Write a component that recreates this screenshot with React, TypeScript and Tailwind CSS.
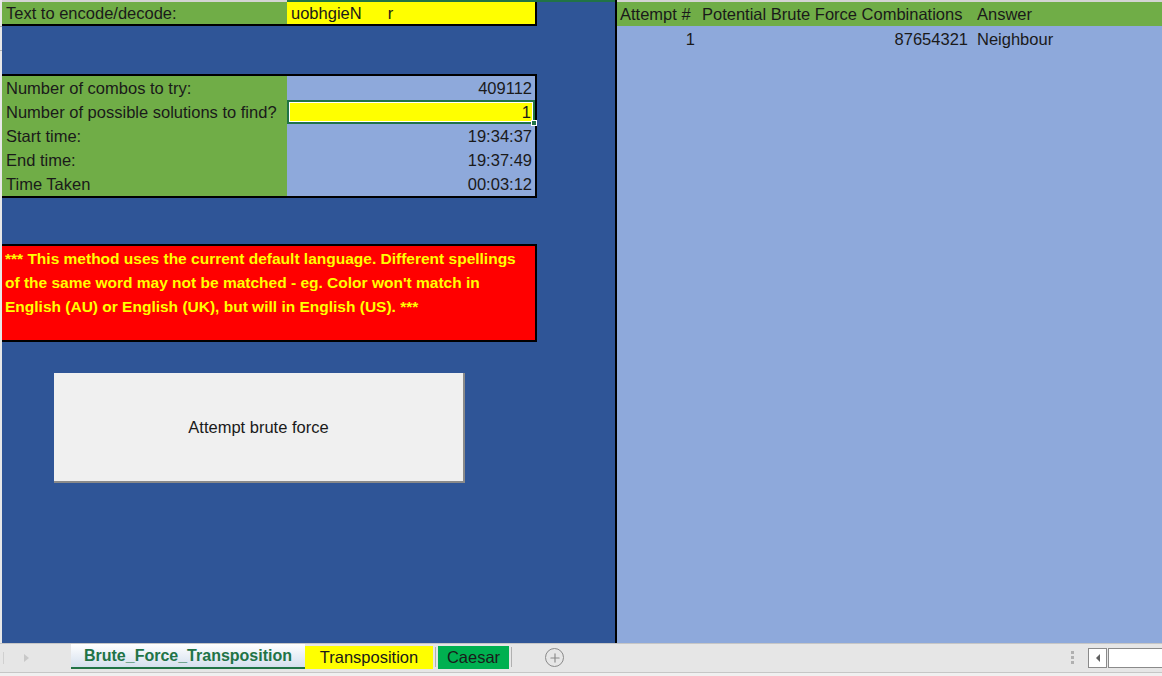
import { Plus } from "lucide-react";

const FONT = { fontFamily: '"Liberation Sans", Arial, sans-serif' };

const rows = [
  { label: "Number of combos to try:", value: "409112" },
  { label: "Number of possible solutions to find?", value: "1", selected: true },
  { label: "Start time:", value: "19:34:37" },
  { label: "End time:", value: "19:37:49" },
  { label: "Time Taken", value: "00:03:12" },
];

function LeftPane() {
  return (
    <div className="flex w-[615px] flex-col bg-[#2f5597]">
      {/* column header edge */}
      <div className="flex h-[2px]">
        <div className="w-[285px] bg-[#d4d4d4]" />
        <div className="flex-1 bg-[#217346]" />
      </div>

      {/* input row */}
      <div className="flex h-[24px] w-[535px] border-b-2 border-r-2 border-black">
        <div className="flex w-[285px] items-center bg-[#70ad47] pl-1 pt-[1px] text-[#1a1a1a]">
          Text to encode/decode:
        </div>
        <div className="flex flex-1 items-center bg-[#ffff00] pl-1 pt-[1px] text-[#1a1a1a]">
          <span>uobhgieN</span>
          <span className="ml-[26px]">r</span>
        </div>
      </div>

      {/* stats table */}
      <div className="mt-[48px] w-[535px] border-2 border-l-0 border-black">
        {rows.map((r) => (
          <div key={r.label} className="flex h-[24px]">
            <div className="flex w-[285px] items-center bg-[#70ad47] pl-1 pt-[1px] text-[#1a1a1a]">
              {r.label}
            </div>
            <div className="flex flex-1 bg-[#8ea9db]">
              {r.selected ? (
                <div className="relative flex flex-1 items-center justify-end border-2 border-[#217346] bg-[#ffff00] pr-[2px] pt-[1px] text-[#1a1a1a]">
                  <div className="absolute inset-0 border border-white" />
                  {r.value}
                  <div className="absolute -bottom-[4px] -right-[4px] h-[6px] w-[6px] border border-white bg-[#217346]" />
                </div>
              ) : (
                <div className="flex flex-1 items-center justify-end pr-[3px] pt-[1px] text-[#1a1a1a]">{r.value}</div>
              )}
            </div>
          </div>
        ))}
      </div>

      {/* warning */}
      <div className="mt-[46px] h-[98px] w-[535px] border-2 border-l-0 border-black bg-[#ff0000] pl-[3px] pr-[10px] pt-[1px] text-[15.5px] font-bold leading-[24px] text-[#ffff00]">
        *** This method uses the current default language. Different spellings of the same word may not be matched - eg. Color won't match in English (AU) or English (UK), but will in English (US). ***
      </div>

      {/* button */}
      <div className="ml-[52px] mt-[31px] flex h-[110px] w-[411px] items-center justify-center border-b-2 border-r-2 border-[#8a8a8a] bg-[#f0f0f0] text-[#1a1a1a]">
        Attempt brute force
      </div>
    </div>
  );
}

function RightPane() {
  return (
    <div className="flex flex-1 flex-col bg-[#8ea9db]">
      <div className="flex h-[2px] bg-[#d4d4d4]" />
      <div className="flex h-[24px] items-center bg-[#70ad47] pt-[1px] text-[#1a1a1a]">
        <div className="w-[82px] pl-[3px]">Attempt #</div>
        <div className="w-[273px] pl-[3px]">Potential Brute Force Combinations</div>
        <div className="pl-[5px]">Answer</div>
      </div>
      <div className="flex h-[24px] items-center pt-[3px] text-[#1a1a1a]">
        <div className="w-[82px] pr-[4px] text-right">1</div>
        <div className="w-[273px] pr-[4px] text-right">87654321</div>
        <div className="pl-[5px]">Neighbour</div>
      </div>
    </div>
  );
}

function TabBar() {
  return (
    <div className="flex h-[33px] flex-col bg-[#f0f0f0]">
      <div className="flex h-[30px] items-start border-t border-b border-[#c6c6c6] bg-[#e6e6e6]">
        <div className="flex h-full w-[71px] items-center">
          <div className="ml-[3px] h-[12px] w-[1px] bg-[#d0d0d0]" />
          <div className="ml-[20px] h-0 w-0 border-y-[4px] border-l-[5px] border-y-transparent border-l-[#c8c8c8]" />
        </div>
        <div className="flex h-[25px] w-[234px] items-center justify-center border-b-2 border-[#217346] bg-gradient-to-b from-white to-[#d5e0ee] text-[16px] font-bold text-[#217346]">
          Brute_Force_Transposition
        </div>
        <div className="mt-[2px] flex h-[23px] w-[128px] items-center justify-center bg-[#ffff00] text-[#1a1a1a]">
          Transposition
        </div>
        <div className="mt-[3px] ml-[2px] h-[20px] w-[1px] bg-[#b0b0b0]" />
        <div className="mt-[2px] ml-[2px] flex h-[23px] w-[71px] items-center justify-center bg-[#00b050] text-[#1a1a1a]">
          Caesar
        </div>
        <div className="mt-[3px] ml-[2px] h-[20px] w-[1px] bg-[#b0b0b0]" />
        <div className="ml-[33px] mt-[4px] flex h-[19px] w-[19px] items-center justify-center rounded-full border border-[#8a8a8a] text-[#8a8a8a]">
          <Plus size={14} strokeWidth={2} />
        </div>
        <div className="flex-1" />
        <div className="mt-[7px] mr-[14px] flex flex-col gap-[2px]">
          <div className="h-[3px] w-[3px] bg-[#b0b0b0]" />
          <div className="h-[3px] w-[3px] bg-[#b0b0b0]" />
          <div className="h-[3px] w-[3px] bg-[#b0b0b0]" />
        </div>
        <div className="mt-[4px] flex h-[20px] w-[19px] items-center justify-center border border-[#8a8a8a] bg-white">
          <div className="h-0 w-0 border-y-[4px] border-r-[4px] border-y-transparent border-r-[#606060]" />
        </div>
        <div className="mt-[4px] ml-[1px] h-[20px] w-[54px] border border-r-0 border-[#8a8a8a] bg-white" />
      </div>
    </div>
  );
}

export default function App() {
  return (
    <div className="h-[676px] w-[1162px] overflow-hidden bg-white text-[16.5px]" style={FONT}>
      <div className="flex h-[643px]">
        {/* row header edge */}
        <div className="flex w-[2px] flex-col bg-[#e8e8e8]">
          <div className="mt-[26px] h-[1px] bg-[#b0b0b0]" />
          <div className="mt-[23px] h-[1px] bg-[#b0b0b0]" />
        </div>
        <div className="flex w-[613px]">
          <LeftPane />
        </div>
        <div className="w-[2px] bg-black" />
        <RightPane />
      </div>
      <TabBar />
    </div>
  );
}
